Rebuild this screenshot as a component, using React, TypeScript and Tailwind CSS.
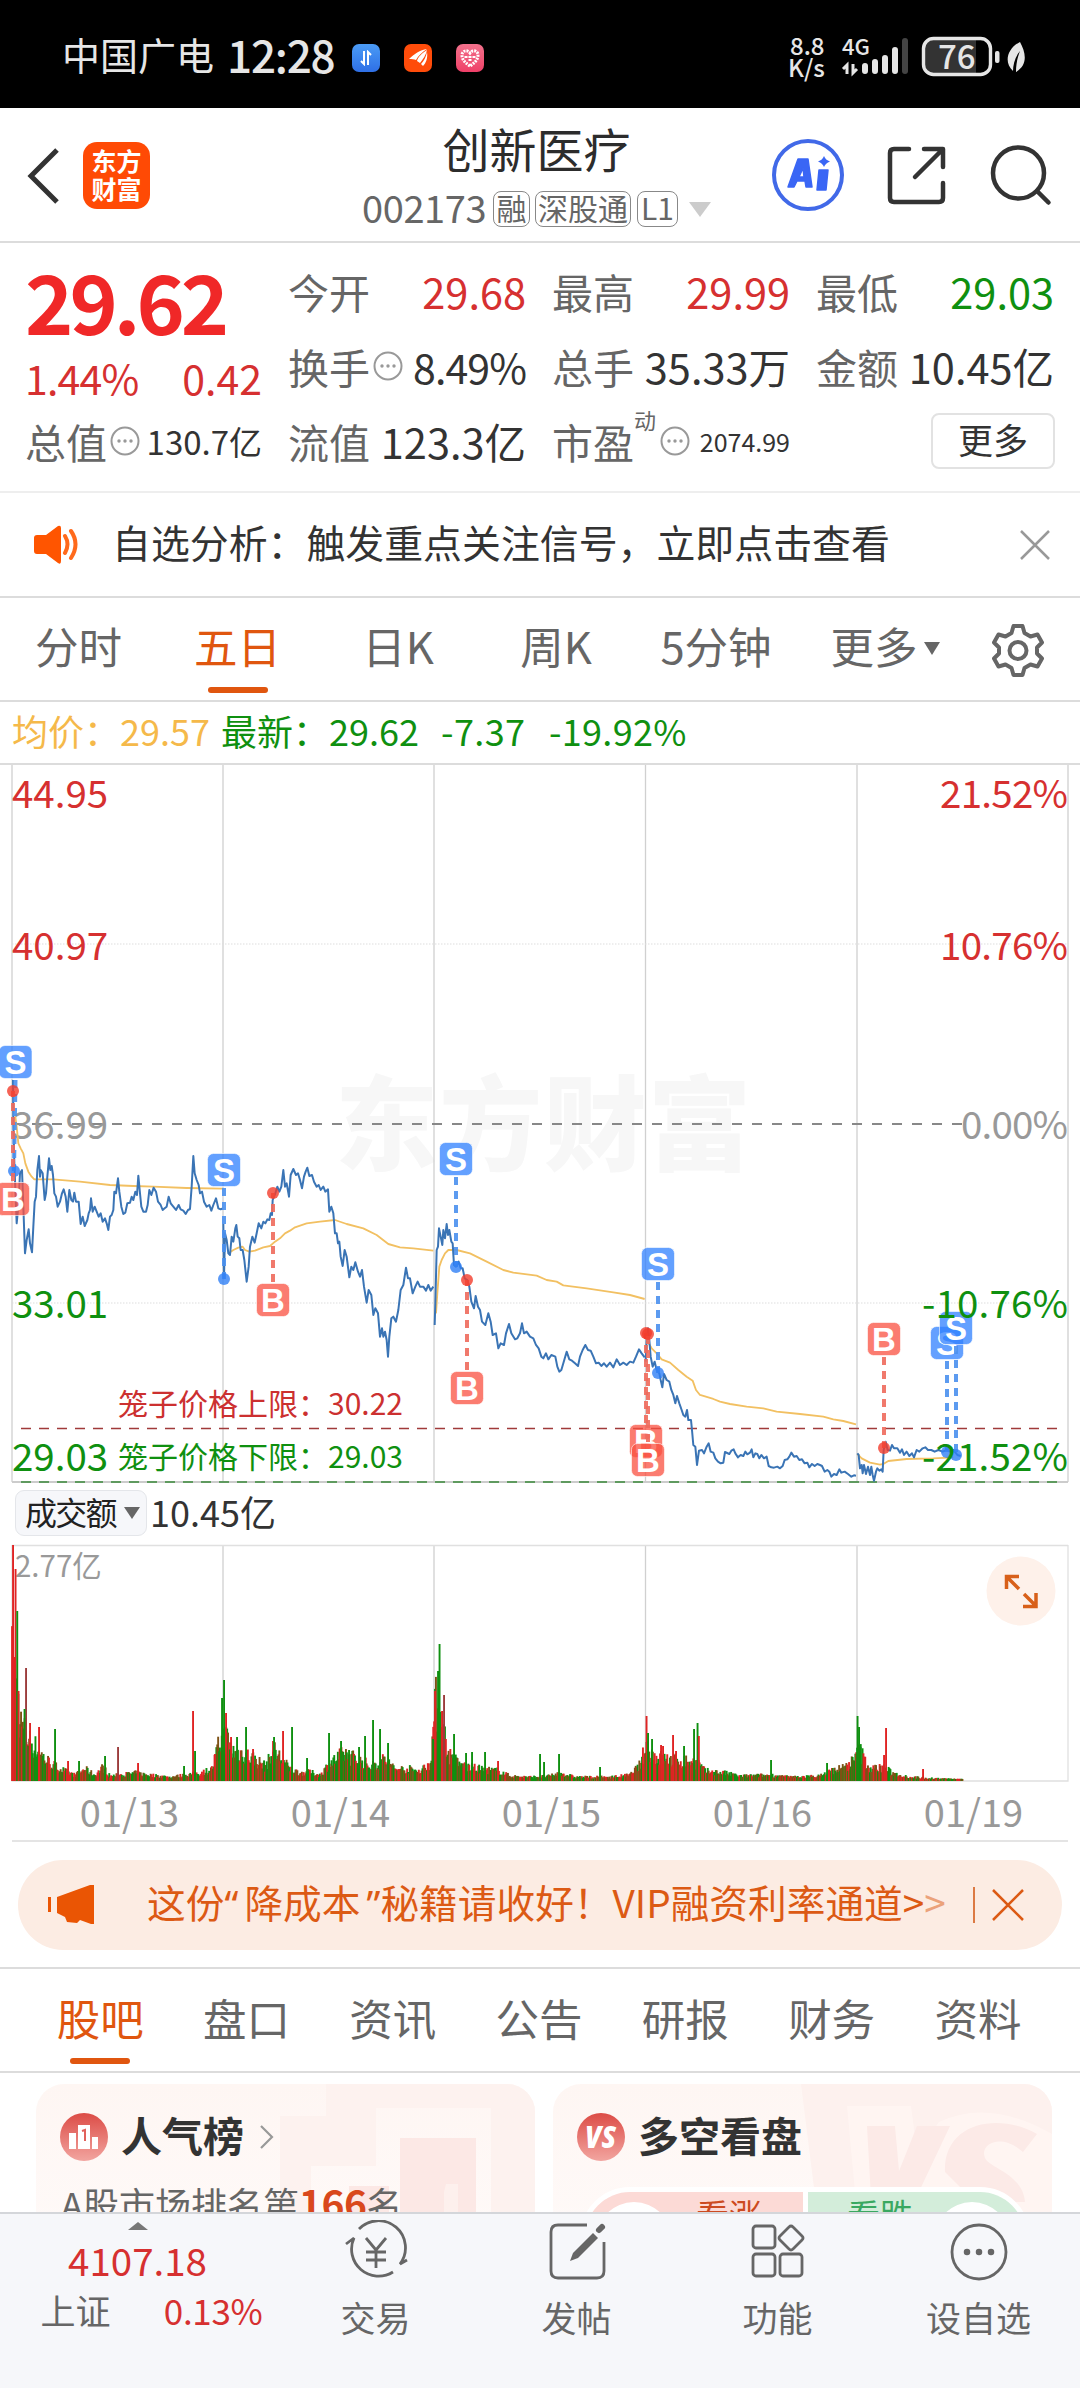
import React from 'react';
import clsx from 'clsx';

type Point = [number, number];
type Side = 'S' | 'B';

const DAY_LINES = [223, 434, 645.5, 857];

// Price series, one polyline for each trading day (three units to the pixel).
const PRICE = [
  '39,180 40,300 43,430 50,610 55,560 60,460 66,450 70,560 75,700 80,660 86,628 90,670 96,697 100,620 104,545 108,530 112,450 117,408 120,470 122,450 128,460 134,540 138,520 142,470 147,415 151,450 155,438 159,465 163,520 168,530 173,560 180,545 186,520 191,508 197,530 202,575 208,510 214,540 219,545 223,518 228,545 236,545 242,612 248,590 254,618 262,600 266,580 270,570 273,535 278,575 284,560 290,575 296,590 302,580 308,605 315,595 320,610 325,630 330,590 335,585 340,570 343,515 348,520 354,475 358,515 364,560 370,582 376,578 382,550 390,548 395,530 400,540 406,515 411,525 415,467 419,510 424,560 430,575 438,575 443,555 448,510 454,525 461,503 468,515 474,545 482,555 488,570 494,565 500,560 506,530 512,550 520,560 528,570 536,555 542,568 550,572 557,582 564,570 570,567 575,500 580,408 584,460 590,480 596,495 600,520 606,515 612,545 620,560 628,555 634,572 640,555 648,535 655,565 662,568 668,565',
  '670,612 672,775 675,640 680,660 685,700 690,705 695,650 700,665 706,625 709,615 713,650 718,655 722,690 728,690 733,720 740,785 746,740 750,680 757,650 764,668 770,640 776,610 784,625 790,605 796,610 802,598 808,600 812,580 816,585 818,540 826,520 832,500 838,515 844,500 850,450 855,500 860,490 867,530 872,465 880,447 888,465 894,460 900,480 906,505 912,470 917,455 922,443 928,468 936,465 942,485 950,500 956,495 962,510 970,500 976,515 984,508 988,575 994,560 1000,580 1005,640 1010,640 1014,670 1018,665 1022,710 1028,738 1034,690 1040,710 1048,772 1054,740 1060,750 1066,727 1074,755 1080,770 1086,750 1092,800 1100,848 1106,810 1114,825 1120,885 1126,865 1134,880 1140,950 1146,925 1150,950 1155,935 1160,960 1164,1010 1168,950 1174,895 1180,890 1188,905 1195,870 1202,810 1210,795 1218,743 1224,775 1230,775 1238,820 1246,800 1253,785 1260,800 1270,800 1278,812 1285,795 1292,812 1300,800',
  '1304,915 1306,850 1310,690 1314,680 1317,625 1322,650 1327,675 1330,630 1335,655 1340,612 1344,645 1348,630 1354,665 1358,670 1362,735 1368,740 1376,725 1382,745 1388,745 1394,775 1402,780 1408,800 1414,845 1422,865 1427,828 1434,860 1440,870 1446,905 1456,915 1465,880 1472,905 1478,945 1488,940 1495,985 1502,970 1512,975 1518,940 1527,912 1534,940 1545,958 1552,955 1560,940 1566,910 1572,940 1580,935 1590,950 1600,955 1608,975 1616,985 1624,1010 1630,1015 1638,1000 1645,1018 1654,1005 1666,1010 1672,1040 1678,1055 1684,1050 1690,1030 1700,995 1708,1018 1716,1022 1725,1030 1734,1038 1740,1010 1748,990 1756,975 1764,990 1772,992 1780,1010 1788,1030 1796,1028 1804,1038 1812,1030 1820,1040 1830,1028 1840,1042 1850,1018 1860,1035 1870,1028 1880,1035 1890,1025 1900,1028 1908,1010 1917,988 1925,1000 1934,1012',
  '1937,1025 1940,960 1944,925 1948,960 1952,1010 1958,1040 1964,1025 1970,1050 1978,1060 1982,1080 1987,1102 1992,1062 2000,1080 2008,1085 2014,1110 2020,1125 2026,1150 2031,1128 2038,1150 2045,1170 2050,1185 2056,1190 2061,1170 2065,1200 2073,1200 2076,1230 2080,1275 2086,1280 2091,1335 2097,1292 2106,1290 2112,1300 2120,1280 2126,1270 2132,1295 2140,1298 2146,1315 2154,1325 2162,1330 2170,1328 2175,1296 2188,1302 2194,1292 2201,1288 2206,1300 2214,1312 2222,1305 2230,1308 2236,1295 2242,1303 2250,1298 2255,1288 2260,1312 2266,1300 2272,1302 2278,1315 2284,1305 2292,1315 2300,1310 2306,1338 2314,1342 2322,1343 2332,1340 2340,1345 2348,1338 2354,1320 2362,1318 2368,1310 2374,1298 2382,1310 2390,1308 2398,1320 2406,1318 2414,1330 2422,1328 2428,1342 2436,1332 2444,1338 2452,1332 2460,1335 2466,1338 2474,1355 2482,1350 2488,1355 2494,1370 2502,1362 2510,1365 2518,1348 2524,1358 2534,1355 2544,1362 2554,1370 2562,1366 2568,1367',
  '2572,1300 2576,1305 2580,1345 2585,1335 2588,1360 2592,1335 2598,1362 2604,1340 2610,1365 2614,1340 2618,1365 2622,1382 2628,1355 2632,1345 2638,1352 2644,1348 2648,1355 2651,1290 2657,1265 2663,1290 2670,1292 2676,1275 2682,1285 2692,1285 2700,1298 2706,1288 2712,1305 2720,1295 2728,1308 2736,1300 2742,1312 2750,1290 2758,1295 2768,1285 2776,1282 2784,1290 2794,1290 2804,1295 2815,1290 2828,1295 2840,1290 2850,1295 2860,1290 2872,1305 2882,1308',
];

const AVERAGE = [
  '46,290 50,320 55,370 62,385 70,400 76,430 85,455 95,470 103,478 160,478 240,485 330,495 400,498 460,500 560,504 668,506',
  '690,697 700,690 715,683 728,680 735,690 748,695 765,692 790,682 810,678 825,665 840,655 855,640 870,632 885,622 920,610 960,605 1005,600 1040,612 1090,625 1130,645 1165,672 1200,682 1240,685 1300,692',
  '1308,880 1312,820 1318,740 1325,720 1335,700 1345,690 1370,690 1410,700 1460,725 1510,750 1540,758 1610,767 1640,780 1670,785 1690,796 1760,805 1840,817 1890,825 1934,837',
  '1940,960 1955,985 1970,1000 1985,1018 2010,1028 2035,1050 2060,1070 2078,1082 2088,1110 2100,1125 2140,1137 2160,1145 2190,1152 2240,1160 2290,1165 2330,1175 2400,1182 2470,1190 2500,1198 2530,1203 2568,1213',
  '2572,1302 2585,1315 2610,1328 2640,1334 2650,1332 2665,1323 2720,1317 2800,1315 2860,1312',
];

const TRADES: { side: Side; badge: Point; dot: Point }[] = [
  { side: 'S', badge: [15.5, 1062], dot: [14, 1171] },
  { side: 'B', badge: [13, 1199], dot: [13, 1091] },
  { side: 'S', badge: [224, 1170], dot: [224, 1279] },
  { side: 'B', badge: [273, 1300], dot: [273, 1193] },
  { side: 'S', badge: [456, 1159], dot: [456, 1267] },
  { side: 'B', badge: [467, 1388], dot: [467, 1280] },
  { side: 'B', badge: [646, 1441], dot: [646, 1333] },
  { side: 'B', badge: [648, 1460], dot: [648, 1334] },
  { side: 'S', badge: [658, 1264], dot: [658, 1373] },
  { side: 'B', badge: [884, 1339], dot: [884, 1448] },
  { side: 'S', badge: [947, 1343], dot: [947, 1452] },
  { side: 'S', badge: [956, 1328], dot: [956, 1455] },
];

const LEVELS = [
  { y: 808, price: '44.95', rate: '21.52%', color: '#d63030', start: 940 },
  { y: 960, price: '40.97', rate: '10.76%', color: '#d63030', start: 940 },
  { y: 1139, price: '36.99', rate: '0.00%', color: '#999', start: 961 },
  { y: 1318, price: '33.01', rate: '-10.76%', color: '#0f9010', start: 922 },
  { y: 1471, price: '29.03', rate: '-21.52%', color: '#0f9010', start: 922 },
];

const ENVELOPE: Point[] = [
  [12, 120], [16, 100], [20, 60], [24, 50], [30, 40], [38, 32], [45, 22], [55, 15], [65, 10], [75, 6], [85, 12],
  [95, 6], [103, 14], [110, 5], [135, 8], [150, 6], [170, 4], [185, 6], [200, 8], [212, 12], [220, 40], [226, 45],
  [232, 30], [243, 28], [255, 22], [265, 15], [275, 30], [290, 12], [300, 8], [310, 9], [320, 6], [330, 18],
  [345, 28], [360, 20], [372, 15], [385, 22], [395, 12], [410, 12], [420, 10], [430, 18], [436, 80], [442, 60],
  [448, 28], [460, 16], [480, 12], [500, 10], [510, 5], [530, 4], [550, 5], [560, 8], [575, 4], [610, 4], [630, 6],
  [640, 16], [646, 35], [655, 25], [665, 22], [680, 20], [690, 20], [698, 18], [705, 10], [725, 8], [740, 5],
  [770, 6], [790, 4], [820, 5], [830, 10], [845, 14], [853, 20], [860, 30], [870, 12], [884, 14], [892, 8],
  [910, 4], [930, 3], [950, 2], [963, 2],
];

const RED = '#e02424';
const GREEN = '#0f9010';
const BROWN = '#7d5214';

const SPIKES: [number, number, string][] = [
  [13, 236, RED], [15.5, 212, RED], [17.2, 170, GREEN], [18.5, 90, RED], [26, 113, '#9c3c3c'], [24.5, 72, GREEN],
  [30, 58, RED], [39, 54, RED], [55, 52, GREEN], [68, 20, RED], [79, 20, GREEN], [105, 25, GREEN],
  [118, 34, '#9c3c3c'], [138, 18, RED], [184, 15, GREEN], [193, 70, RED], [195, 30, GREEN], [215, 27, RED],
  [222, 83, GREEN], [224, 101, GREEN], [226, 68, RED], [231, 44, RED], [237, 44, GREEN], [246, 54, GREEN],
  [253, 32, RED], [273, 40, RED], [274, 44, GREEN], [283, 50, RED], [292, 54, GREEN], [307, 23, GREEN],
  [329, 48, GREEN], [341, 40, GREEN], [349, 31, GREEN], [359, 34, GREEN], [365, 45, GREEN], [373, 61, GREEN],
  [380, 52, GREEN], [388, 38, GREEN], [433, 42, GREEN], [435, 90, RED], [438, 110, GREEN], [439.5, 137, GREEN],
  [442, 70, RED], [444, 86, '#9c3c3c'], [454, 47, GREEN], [466, 28, GREEN], [472, 29, GREEN], [485, 29, GREEN],
  [498, 20, RED], [540, 27, GREEN], [544, 19, GREEN], [559, 27, GREEN], [600, 14, GREEN], [646.5, 65, RED],
  [648, 48, GREEN], [652, 42, GREEN], [661, 36, RED], [663, 35, RED], [673, 46, RED], [676, 30, RED],
  [684, 35, GREEN], [694, 52, GREEN], [697.5, 58, GREEN], [698.8, 45, RED], [771, 21, GREEN], [827, 18, GREEN],
  [857.5, 65, GREEN], [859, 54, GREEN], [860.5, 34, GREEN], [884, 26, RED], [886, 53, RED], [923, 12, RED],
];

const volumeBars = () => {
  const bars: [number, number, string][] = [];
  let seed = 7;
  const random = () => {
    seed = (seed * 16807) % 2147483647;
    return seed / 2147483647;
  };
  let k = 0;
  for (let x = 12; x <= 963; x += 0.9) {
    while (k < ENVELOPE.length - 2 && ENVELOPE[k + 1][0] < x) k++;
    const [x0, h0] = ENVELOPE[k];
    const [x1, h1] = ENVELOPE[k + 1];
    const base = h0 + ((h1 - h0) * (x - x0)) / (x1 - x0);
    const tone = random();
    const color = tone < 0.36 ? RED : tone < 0.72 ? GREEN : BROWN;
    bars.push([x, Math.max(2, base * (0.6 + random() * 0.75)), color]);
  }
  return bars.concat(SPIKES);
};

const StatusBar = () => (
  <div className="h-[108px] bg-black text-[#e6e6e6] flex items-center pb-[1px]">
    <span className="ml-[62px] w-[165px] text-[38px] leading-[50px] whitespace-nowrap">中国广电</span>
    <span className="w-[125px] text-[44px] leading-[50px] font-medium tracking-[-1.200px]">12:28</span>
    <div className="flex gap-6 mt-2">
      <span className="size-7 rounded-[7px] bg-linear-to-b from-[#4b9bf5] to-[#2f6fe6] flex items-center justify-center">
        <svg width="14" height="16" viewBox="0 0 14 16" fill="none" stroke="#fff" strokeWidth="2">
          <path d="M5 1v13L2 11M9 15V2l3 3" />
        </svg>
      </span>
      <span className="size-7 rounded-[7px] bg-[#ff4c0a]">
        <svg viewBox="0 0 28 28" fill="#fff">
          <path d="M5 15C10 10 16 6 23 5c-5 3-9 7-11 11-2-1-4-1-7-1zM13 17c1-4 5-8 10-11-1 5-4 9-7 13zM17 20c3-3 5-7 6-12 1 6-1 11-4 14z" />
        </svg>
      </span>
      <span className="size-7 rounded-[7px] bg-linear-to-b from-[#f2708c] to-[#ef3f68]">
        <svg viewBox="0 0 28 28" fill="none" stroke="#fff" strokeWidth="3" strokeDasharray="2 1">
          <path d="M14 22C8 18 6 15 6 11s5-6 8-2c3-4 8-2 8 2s-2 7-8 11zM10 12v3M14 12v6M18 12v3" />
        </svg>
      </span>
    </div>
    <div className="ml-[304px] mt-[5px] w-[53px] text-[24px] leading-[22px] font-medium">
      <div className="pl-0.5">8.8</div>
      <div>K/s</div>
    </div>
    <svg className="mt-[7px]" width="70" height="42" viewBox="840 37 70 42">
      <text x="841" y="56" fontSize="22" fontWeight="500" fill="#e6e6e6">4G</text>
      <path d="M846 75V66l-4 4M852 65v9l4-4" fill="none" stroke="#e6e6e6" strokeWidth="3" />
      <g stroke="#e6e6e6" strokeWidth="6" strokeLinecap="round">
        <path d="M864 67v5M874 63v9M884 59v13M894 51v21" />
        <path d="M904 42v30" stroke="#444" />
      </g>
    </svg>
    <svg className="ml-2.5 mt-[7px]" width="110" height="42" viewBox="920 36 110 42">
      <path d="M930 40h45v33h-45q-6-2-6-8V48q0-6 6-8z" fill="#333" />
      <rect x="922.5" y="38.5" width="67" height="36" rx="10" fill="none" stroke="#e6e6e6" strokeWidth="3.4" />
      <text x="937" y="69" fontSize="33" fontWeight="500" fill="#e6e6e6">76</text>
      <rect x="994" y="51" width="4.500" height="12" rx="2" fill="#e6e6e6" />
      <path d="M1019 42c6 11 8 23-4 30 0-9 2-16 4-21-5 6-7 14-7 20-10-9-5-23 7-29z" fill="#e6e6e6" />
    </svg>
  </div>
);

const Tag = ({ children, width }: { children: React.ReactNode; width: string }) => (
  <span className={clsx('h-9 rounded-[8px] border-[1.5px] border-[#888] text-[30px] leading-[30px] text-center', width)}>
    {children}
  </span>
);

const Header = () => (
  <header className="h-[135px] border-b-2 border-[#dcdcdc] flex">
    <svg className="ml-[26px] mt-[39px]" width="34" height="58" viewBox="0 0 34 58" fill="none" stroke="#333" strokeWidth="5">
      <path d="M31 3L5 29l26 26" />
    </svg>
    <div className="ml-[23px] mt-[34px] size-[67px] rounded-[14px] bg-[#ff4a05] text-white text-[25px] leading-[28px] font-bold text-center pt-[4px]">
      东方
      <br />
      财富
    </div>
    <div className="ml-[212px] w-[349px] flex flex-col items-center">
      <h1 className="mt-[10px] text-[47px] leading-[60px] text-[#2c2c2c]">创新医疗</h1>
      <div className="mt-[13px] flex items-center text-[#666] text-[38px] leading-[36px] whitespace-nowrap">
        <span className="w-[131px] tracking-[-0.4px] -mt-1">002173</span>
        <Tag width="w-[37px]">融</Tag>
        <span className="w-[5px]" />
        <Tag width="w-[96px]">深股通</Tag>
        <span className="w-[6px]" />
        <Tag width="w-[41px]">L1</Tag>
        <svg className="ml-[11px]" width="22" height="15" fill="#ccc">
          <path d="M0 0h22L11 15z" />
        </svg>
      </div>
    </div>
    <svg className="ml-[61px] mt-[31px]" width="72" height="72" viewBox="772 139 72 72">
      <circle cx="808" cy="175" r="34" fill="none" stroke="#4169e8" strokeWidth="4" />
      <path
        d="M788 187l10-28h10l4 28h-6l-1-6h-8l-3 6zM799 177h5l-1-9zM819 170h9l-2 20h-9z"
        fill="#3a66f5"
        stroke="#3a66f5"
        strokeWidth="1.500"
        strokeLinejoin="round"
      />
      <path d="M824 156q1.500 4 6 5.500-4.500 1.500-6 5.500-1.500-4-6-5.500 4.500-1.500 6-5.500z" fill="#3a66f5" />
    </svg>
    <svg className="ml-[42px] mt-[37px]" width="62" height="62" viewBox="886 145 62 62" fill="none" stroke="#333" strokeWidth="4.500" strokeLinecap="round" strokeLinejoin="round">
      <path d="M909 149h-15q-4 0-4 4v45q0 4 4 4h45q4 0 4-4v-15M924 149h19v18M942 150l-27 27" />
    </svg>
    <svg className="ml-[42px] mt-[36px]" width="64" height="64" viewBox="990 144 64 64" fill="none" stroke="#333" strokeWidth="4.500" strokeLinecap="round">
      <circle cx="1018.500" cy="173" r="25.500" />
      <path d="M1037 191l11.500 11.500" />
    </svg>
  </header>
);

const Dots = () => (
  <svg className="mx-[3px] shrink-0" width="30" height="30" viewBox="0 0 30 30" fill="#999">
    <circle cx="15" cy="15" r="13.500" fill="none" stroke="#999" strokeWidth="2" />
    <circle cx="9" cy="15" r="1.700" />
    <circle cx="15" cy="15" r="1.700" />
    <circle cx="21" cy="15" r="1.700" />
  </svg>
);

interface StatProps {
  label: string;
  value: string;
  tone?: string;
  size?: string;
  sup?: string;
  dots?: boolean;
}

const Stat = ({ label, value, tone = 'text-[#333]', size = 'text-[41.500px]', sup, dots }: StatProps) => (
  <div className="h-[75px] flex items-center whitespace-nowrap">
    <span className="text-[#666] text-[41px]">{label}</span>
    {sup && <span className="w-[23px] text-[#666] text-[22px] -mt-[44px]">{sup}</span>}
    {dots && <Dots />}
    <span className={clsx('ml-auto', tone, size)}>{value}</span>
  </div>
);

const Quote = () => (
  <section className="h-[250px] border-b-2 border-[#eee] pl-[25px] pt-[10px] flex gap-[26px] leading-[60px]">
    <div className="w-[237px]">
      <div className="text-[82px] leading-[93px] h-[90px] font-bold text-[#f02828] tracking-[-4px]">29.62</div>
      <div className="h-[60px] mt-[4px] flex justify-between text-[41px] text-[#d63030]">
        <span className="tracking-[-0.8px]">1.44%</span>
        <span>0.42</span>
      </div>
      <div className="-mt-[4px]">
        <Stat label="总值" value="130.7亿" size="text-[33px]" dots />
      </div>
    </div>
    <div className="w-[238px]">
      <Stat label="今开" value="29.68" tone="text-[#d63030]" />
      <Stat label="换手" value="8.49%" size="text-[41px] tracking-[-0.900px]" dots />
      <Stat label="流值" value="123.3亿" />
    </div>
    <div className="w-[238px]">
      <Stat label="最高" value="29.99" tone="text-[#d63030]" />
      <Stat label="总手" value="35.33万" />
      <Stat label="市盈" value="2074.99" size="text-[25px]" sup="动" dots />
    </div>
    <div className="w-[238px]">
      <Stat label="最低" value="29.03" tone="text-[#0f9010]" />
      <Stat label="金额" value="10.45亿" />
      <div className="ml-auto -mr-[1px] mt-[10px] w-[124px] h-14 rounded-[8px] border-2 border-[#e2e2e2] text-[35px] leading-[48px] text-center text-[#333]">
        更多
      </div>
    </div>
  </section>
);

const Notice = () => (
  <div className="h-[105px] border-b-2 border-[#dcdcdc] flex items-center">
    <svg className="ml-[33px]" width="46" height="40" viewBox="33 525 46 40">
      <path d="M34 538q0-3 3-3h9l12-9q3-1 3 2v33q0 4-3 2l-12-9h-9q-3 0-3-3z" fill="#ff5500" />
      <path d="M65 536q5 8 0 17M71 531q9 13 0 27" fill="none" stroke="#ff6a1c" strokeWidth="4" strokeLinecap="round" />
    </svg>
    <span className="ml-[33px] -mt-1.5 text-[38.900px] text-[#333] whitespace-nowrap">自选分析：触发重点关注信号，立即点击查看</span>
    <svg className="ml-auto mr-[30px]" width="30" height="32" fill="none" stroke="#999" strokeWidth="2.500">
      <path d="M1 2l28 28M29 2L1 30" />
    </svg>
  </div>
);

const PERIODS = [
  { name: '分时', width: 'w-[157px]' },
  { name: '五日', width: 'w-[161px]', active: true },
  { name: '日K', width: 'w-[160px]' },
  { name: '周K', width: 'w-[156px]' },
  { name: '5分钟', width: 'w-[164px]' },
  { name: '更多', width: 'w-[174px]', menu: true },
];

const Underline = () => <span className="absolute bottom-[7px] left-1/2 -ml-[30px] w-[60px] h-[6px] rounded-full bg-[#e0560f]" />;

const Periods = () => (
  <nav className="h-[104px] border-b-2 border-[#dcdcdc] flex text-[43.500px] leading-[95px] text-[#666]">
    {PERIODS.map(({ name, width, active, menu }) => (
      <div key={name} className={clsx('relative flex justify-center shrink-0', width, active && 'text-[#e0560f]')}>
        {name}
        {menu && (
          <svg className="ml-1.5 mt-[44px]" width="16" height="13" fill="#666">
            <path d="M0 0h16L8 13z" />
          </svg>
        )}
        {active && <Underline />}
      </div>
    ))}
    <svg className="ml-[19px] mt-[24px]" width="54" height="56" viewBox="0 0 54 56" fill="none" stroke="#666" strokeWidth="4" strokeLinejoin="round">
      <path d="M22.500 4h9l2 7 6 3.500 7-2 4.500 8-5 5v6l5 5-4.500 8-7-2-6 3.500-2 7h-9l-2-7-6-3.500-7 2-4.500-8 5-5v-6l-5-5 4.500-8 7 2 6-3.500z" />
      <circle cx="27" cy="28.500" r="8.500" />
    </svg>
  </nav>
);

const Summary = () => (
  <div className="h-[63px] border-b-2 border-[#dcdcdc] flex text-[36px] leading-[56px] text-[#0f9010] whitespace-pre">
    <span className="ml-3 w-[209px] text-[#f5b94a]">均价：29.57</span>
    <span className="w-[220px]">最新：29.62</span>
    <span className="w-[108px] tracking-[0.400px]">-7.37</span>
    <span className="tracking-[0.300px]">-19.92%</span>
  </div>
);

const Trade = ({ side, badge, dot }: { side: Side; badge: Point; dot: Point }) => {
  const sell = side === 'S';
  const from = badge[1] + (badge[1] < dot[1] ? 18 : -18);
  return (
    <g>
      <line x1={badge[0]} x2={dot[0]} y1={from} y2={dot[1]} stroke={sell ? '#4a90ee' : '#ee6a5c'} strokeOpacity=".9" strokeWidth="4" strokeDasharray="8 6" />
      <circle cx={dot[0]} cy={dot[1]} r="6" fill={sell ? '#2f80f5' : '#f23c2c'} fillOpacity=".8" />
      <rect x={badge[0] - 16.5} y={badge[1] - 16.5} width="33" height="33" rx="6" fill={sell ? '#2f80ff' : '#fa5040'} fillOpacity=".75" stroke="#fff" strokeOpacity=".6" />
      <text x={badge[0]} y={badge[1] + 12} textAnchor="middle" fontFamily="Liberation Sans, sans-serif" fontSize="33" fontWeight="700" fill="#fff">
        {side}
      </text>
    </g>
  );
};

const PriceChart = () => (
  <svg className="block" width="1080" height="719" viewBox="0 765 1080 719">
    <text x="335" y="1163" fontSize="103" fontWeight="900" fill="#f7f7f7" textLength="416">东方财富</text>
    <g stroke="#d0d0d0" strokeWidth="1.300">
      {DAY_LINES.map((x) => (
        <line key={x} x1={x} x2={x} y1="765" y2="1482" />
      ))}
      <path d="M12 765v717M1068 765v717" stroke="#e0e0e0" strokeWidth="2" />
      <path d="M12 944h1056M12 1303h1056" stroke="#ddd" strokeDasharray="1.500 1.500" strokeWidth="1" />
      <path d="M12 1482h1056" stroke="#ccc" strokeWidth="2" />
    </g>
    <path d="M12 1124H962" stroke="#888" strokeWidth="2" strokeDasharray="10 10" />
    <path d="M21 1428.500H1058" stroke="#a03a3a" strokeWidth="1.300" strokeDasharray="10 8" />
    <path d="M21 1482H1058" stroke="#5f9a5f" strokeWidth="2" strokeDasharray="10 8" />
    {LEVELS.slice(0, 3).map((l) => (
      <text key={l.price} x="12" y={l.y} fontSize="38.5" fill={l.color}>{l.price}</text>
    ))}
    <g transform="translate(0 1020) scale(.33333)" fill="none" strokeLinejoin="round">
      {AVERAGE.map((points) => (
        <polyline key={points} points={points} stroke="#f2c062" strokeWidth="5.500" />
      ))}
      {PRICE.map((points) => (
        <polyline key={points} points={points} stroke="#3a74b5" strokeWidth="6" />
      ))}
    </g>
    {TRADES.map((trade, i) => (
      <Trade key={i} {...trade} />
    ))}
    {LEVELS.slice(3).map((l) => (
      <text key={l.price} x="12" y={l.y} fontSize="38.5" fill={l.color}>{l.price}</text>
    ))}
    {LEVELS.map((l) => (
      <text key={l.rate} x={l.start} y={l.y} fontSize="38.5" textLength={1068 - l.start} fill={l.color}>{l.rate}</text>
    ))}
    <text x="118" y="1415" fontSize="30" fill="#cc3030">笼子价格上限：30.22</text>
    <text x="118" y="1468" fontSize="30" fill="#0f9010">笼子价格下限：29.03</text>
  </svg>
);

const VolumeChart = () => (
  <div className="relative">
    <svg className="block" width="1080" height="239" viewBox="0 1544 1080 239">
      <g stroke="#d0d0d0" strokeWidth="1.300">
        {DAY_LINES.map((x) => (
          <line key={x} x1={x} x2={x} y1="1545" y2="1781" />
        ))}
        <path d="M12 1545.500h1056M1068 1545v236H12V1545" fill="none" stroke="#e0e0e0" />
      </g>
      <text x="15" y="1577" fontSize="29.5" fill="#999">2.77亿</text>
      {volumeBars().map(([x, h, color], i) => (
        <rect key={i} x={x - 0.9} y={1781 - h} width="1.9" height={h} fill={color} />
      ))}
    </svg>
    <svg className="absolute right-[24px] top-[12px]" width="70" height="70" viewBox="0 0 70 70" fill="none" stroke="#d8601a" strokeWidth="3.500">
      <circle cx="35" cy="35" r="34.500" fill="#fef1ea" stroke="none" />
      <path d="M33 20.500H20.500V33M21 21l12 12M37 50.500h13V37M50 50L38 38" />
    </svg>
  </div>
);

const Volume = () => (
  <section className="pb-[1px]">
    <div className="h-[60px] pt-[6px] flex">
      <div className="ml-[15px] w-[132px] h-[46px] rounded-[9px] border-[1.5px] border-[#e4e6ea] bg-[#f6f7fa] text-[#222] text-[32px] leading-[40px] tracking-[-1.700px] pl-[9px] flex items-center whitespace-nowrap">
        <span className="-mt-1">成交额</span>
        <svg className="ml-[8px]" width="16" height="12" fill="#666">
          <path d="M0 0h16L8 12z" />
        </svg>
      </div>
      <span className="ml-[3px] text-[36px] leading-[42px] text-[#333]">10.45亿</span>
    </div>
    <VolumeChart />
    <div className="h-[57px] flex pl-[24px] text-[38px] leading-[55px] text-[#999]">
      {['01/13', '01/14', '01/15', '01/16', '01/19'].map((day) => (
        <span key={day} className="w-[211px] text-center">{day}</span>
      ))}
    </div>
    <div className="mx-3 h-[2px] bg-[#e4e4e4]" />
  </section>
);

const Banner = () => (
  <div className="h-[126px] border-b-2 border-[#dcdcdc] pt-[17px] px-[18px]">
    <div className="h-[90px] rounded-full bg-[#fcece3] text-[#dc5a14] flex items-center">
      <svg className="ml-[29px] shrink-0" width="48" height="42" viewBox="47 1884 48 42" fill="#ea5504">
        <path d="M48 1897h3v15h-3zM57 1897l33-12h4v39h-3l-11-4-3 3-10-1-2-5-8-4z" />
      </svg>
      <div className="ml-[52px] w-[808px] shrink-0 -mt-1.5 text-[38.700px] whitespace-nowrap">
        这份<span className="inline-block w-[20px] font-['Noto_Sans']">“</span>降成本
        <span className="inline-block w-[20px] text-right font-['Noto_Sans']">”</span>秘籍请收好！VIP融资利率通道&gt;
        <span className="opacity-50">&gt;</span>
      </div>
      <span className="ml-[18px] w-[2px] h-9 bg-[#dc7a44]" />
      <svg className="ml-[17px]" width="32" height="32" fill="none" stroke="#dc5a14" strokeWidth="2.500">
        <path d="M1 1l30 30M31 1L1 31" />
      </svg>
    </div>
  </div>
);

const Sections = () => (
  <nav className="h-[104px] border-b-2 border-[#dcdcdc] pl-[27px] flex text-[43.500px] leading-[98px] text-[#666]">
    {['股吧', '盘口', '资讯', '公告', '研报', '财务', '资料'].map((name, i) => (
      <div key={name} className={clsx('relative w-[146.300px] text-center', i === 0 && 'text-[#e0560f]')}>
        {name}
        {i === 0 && <Underline />}
      </div>
    ))}
  </nav>
);

const Card = ({ children, art }: { children: React.ReactNode; art: React.ReactNode }) => (
  <div className="relative w-[499px] h-[200px] rounded-[28px] overflow-hidden bg-linear-to-b from-[#fef6f3] to-[#fffbfa]">
    <svg className="absolute inset-0" width="499" height="200">{art}</svg>
    <div className="relative">{children}</div>
  </div>
);

const Cards = () => (
  <div className="h-[139px] overflow-hidden pt-[11px] pl-9 flex gap-[18px]">
    <Card
      art={
        <>
          <path d="M290 0H499V128H455V24H340V82H275V128H244V32H290z" fill="#fdf2ef" />
          <path d="M364 54h76v74h-76zM313 102h40v26h-40z" fill="#fce8e5" />
          <path d="M410 100h12v28h-14v-20z" fill="#fdf0ed" />
        </>
      }
    >
      <div className="flex items-center h-[106px] pl-6">
        <svg width="48" height="48" viewBox="0 0 48 48" fill="#fff">
          <circle cx="24" cy="24" r="24" fill="url(#badge)" />
          <path d="M9 20h7v16H9zM18 12h12v24H18zM32 24h6v12h-6z" />
          <path d="M22 18l3-1v11" fill="none" stroke="#e2615b" strokeWidth="2" />
        </svg>
        <span className="ml-[13px] -mt-[5px] text-[41px] font-bold text-[#333]">人气榜</span>
        <svg className="ml-[16px]" width="14" height="24" fill="none" stroke="#999" strokeWidth="2.200">
          <path d="M1 1l11 11L1 23" />
        </svg>
      </div>
      <div className="pl-[25px] -mt-[13px] text-[36px] leading-[50px] text-[#666] whitespace-nowrap">
        A股市场排名第<span className="text-[39px] font-bold text-[#d9481c] tracking-[-0.500px]">166</span>名
      </div>
    </Card>
    <Card
      art={
        <>
          <path d="M248 0H499V128H264z" fill="#fdf1ee" />
          <path d="M294 22h64l6 46 22-30q50-24 113 12v80H304z" fill="#fff5f2" />
          <path d="M314 42h28l4 45 18-45h33l-34 72h-45zM470 68c-22-20-44-8-38 6 4 10 38 16 40 44h-50l-30-30c-2-50 54-60 92-38z" fill="#fceae7" />
        </>
      }
    >
      <div className="flex items-center h-[106px] pl-6">
        <svg width="48" height="48" viewBox="0 0 48 48">
          <defs>
            <linearGradient id="badge" x1="0" y1="0" x2="0" y2="1">
              <stop offset="0" stopColor="#dc4c46" />
              <stop offset="1" stopColor="#f2a5a0" />
            </linearGradient>
          </defs>
          <circle cx="24" cy="24" r="24" fill="url(#badge)" />
          <text x="8" y="35" fontFamily="Open Sans, sans-serif" fontSize="30" fontWeight="800" fontStyle="italic" fill="#fff" textLength="31" lengthAdjust="spacingAndGlyphs">VS</text>
        </svg>
        <span className="ml-[13px] -mt-[5px] text-[41px] font-bold text-[#333]">多空看盘</span>
      </div>
      <div className="-mt-[3px] ml-[27px] w-[450px] h-[100px] rounded-full border-[5px] border-white flex gap-[5px] overflow-hidden text-[33px] leading-[44px] bg-white">
        <div className="flex-1 bg-[#fcdad6] text-[#cc4a20] flex">
          <span className="ml-[11px] mt-[10px] size-[76px] rounded-full bg-white" />
          <span className="ml-[24px]">看涨</span>
        </div>
        <div className="flex-1 bg-[#d3edda] text-[#3aa860] flex justify-end">
          <span className="mr-[21px]">看跌</span>
          <span className="mr-[15px] mt-[10px] size-[76px] rounded-full bg-white" />
        </div>
      </div>
    </Card>
  </div>
);

const TABS = [
  {
    label: '交易',
    icon: (
      <>
        <path d="M15 9A27 27 0 0 1 56 44l7-4M49 52A27 27 0 0 1 10 18L2 24" />
        <path d="M22 18l10 12 10-12M32 30v18M22 32h20M22 40h20" />
      </>
    ),
  },
  {
    label: '发帖',
    icon: (
      <>
        <path d="M42 5H13q-7 0-7 7v39q0 7 7 7h39q7 0 7-7V22" />
        <path d="M25 41l3-8 20-20 5 5-20 20z" fill="#666" stroke="none" />
        <path d="M54 10l3-3" strokeWidth="6" strokeLinecap="round" />
      </>
    ),
  },
  {
    label: '功能',
    icon: (
      <>
        <rect x="7" y="6" width="22" height="22" rx="3" />
        <rect x="7" y="34" width="22" height="22" rx="3" />
        <rect x="34" y="34" width="22" height="22" rx="3" />
        <path d="M43 7q2-2 4 0l9 9q2 2 0 4l-9 9q-2 2-4 0l-9-9q-2-2 0-4z" />
      </>
    ),
  },
  {
    label: '设自选',
    icon: (
      <>
        <circle cx="32" cy="32" r="27" />
        <path d="M20 32h.01M32 32h.01M44 32h.01" strokeWidth="6.500" strokeLinecap="round" />
      </>
    ),
  },
];

const BottomBar = () => (
  <footer className="h-[177px] border-t-2 border-[#d4d6da] bg-[#f6f7fa] flex text-[35px] text-[#666]">
    <div className="w-[275px] flex flex-col items-center text-[#d63030]">
      <svg className="mt-[8px]" width="20" height="8" fill="#777">
        <path d="M10 0l10 8H0z" />
      </svg>
      <span className="text-[38.500px] leading-[59px]">4107.18</span>
      <div className="mt-[2px] ml-[28px] w-[222px] flex justify-between leading-[38px]">
        <span className="text-[#666]">上证</span>
        <span className="tracking-[-0.300px]">0.13%</span>
      </div>
    </div>
    {TABS.map(({ label, icon }) => (
      <div key={label} className="w-[201px] flex flex-col items-center">
        <svg className="mt-[6px]" width="64" height="64" viewBox="0 0 64 64" fill="none" stroke="#666" strokeWidth="2.800">
          {icon}
        </svg>
        <span className="mt-[10px] leading-[46px]">{label}</span>
      </div>
    ))}
  </footer>
);

const App = () => (
  <main className="w-[1080px] h-[2388px] overflow-hidden bg-white font-['Noto_Sans_CJK_SC',sans-serif]">
    <StatusBar />
    <Header />
    <Quote />
    <Notice />
    <Periods />
    <Summary />
    <PriceChart />
    <Volume />
    <Banner />
    <Sections />
    <Cards />
    <BottomBar />
  </main>
);

export default App;
